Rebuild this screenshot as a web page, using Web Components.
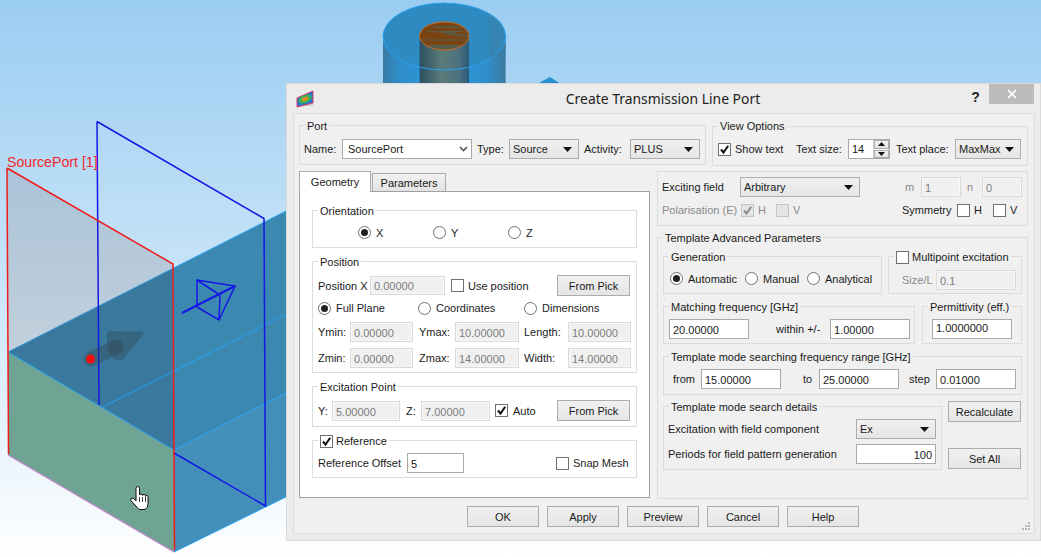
<!DOCTYPE html>
<html>
<head>
<meta charset="utf-8">
<title>Create Transmission Line Port</title>
<style>
  html, body { margin: 0; padding: 0; }
  body { width: 1041px; height: 557px; overflow: hidden; position: relative; font: 11px "Liberation Sans", sans-serif; color: #1a1a1a; }
</style>
</head>
<body>
<cad-scene></cad-scene>
<port-dialog></port-dialog>

<script>
/* shared by the panels that lay out rows of controls */
const PANEL_CSS = `
  :host { display: block; box-sizing: border-box; }
  .row { display: flex; align-items: center; }
  .l { display: block; flex: none; white-space: nowrap; }
  .off { color: #8a8a8a; }
`;

class BaseEl extends HTMLElement {
    constructor() {
        super();
        this.attachShadow({ mode: 'open' });
    }
    connectedCallback() {
        this.shadowRoot.innerHTML = this.markup();
    }
}

/* Group box with a title sitting on its top border */
class UiGroup extends BaseEl {
    markup() {
        const title = this.getAttribute('title-text');
        return `<style>
            :host { display: block; box-sizing: border-box; border: 1px solid #dcdcdc; position: relative; flex: none; }
            .legend { position: absolute; left: 5px; top: var(--legend-top, -8px); padding: 0 2px; height: 16px; line-height: 16px; background: var(--bg, #f0f0f0); white-space: nowrap; display: flex; align-items: center; }
        </style>
        <div class="legend">${title ? title : ''}<slot name="legend"></slot></div>
        <slot></slot>`;
    }
}

class UiInput extends BaseEl {
    markup() {
        return `<style>
            :host { display: block; box-sizing: border-box; flex: none; height: 20px; border: 1px solid #a9a9a9; background: #fff; padding: 1px 3px 0; line-height: 18px; white-space: nowrap; color: #1a1a1a; overflow: hidden; }
            :host([off]) { border-color: #d9d9d9; background: #f0f0f0; color: #7d7d7d; box-shadow: inset 0 0 0 1px #f8f8f8; }
            :host([end]) { text-align: right; }
        </style><slot></slot>`;
    }
}

class UiCombo extends BaseEl {
    markup() {
        const edit = this.hasAttribute('edit');
        const arrow = edit
            ? `<svg width="9" height="6" viewBox="0 0 9 6"><path d="M1 1l3.5 3.5L8 1" fill="none" stroke="#555" stroke-width="1.6"/></svg>`
            : `<svg width="9" height="5" viewBox="0 0 9 5"><path d="M0 0h9L4.5 5z" fill="#111"/></svg>`;
        return `<style>
            :host { display: flex; align-items: center; justify-content: space-between; box-sizing: border-box; flex: none; height: 20px; border: 1px solid #acacac; background: linear-gradient(#f0f0f0, #e5e5e5); padding: 0 6px 0 3px; white-space: nowrap; }
            :host([edit]) { background: #fff; border-color: #a9a9a9; padding-left: 5px; padding-right: 3px; }
        </style><span><slot></slot></span>${arrow}`;
    }
}

class UiSpin extends BaseEl {
    markup() {
        return `<style>
            :host { display: flex; box-sizing: border-box; flex: none; height: 20px; border: 1px solid #a9a9a9; background: #fff; }
            .v { flex: 1; padding-left: 3px; line-height: 19px; }
            .b { width: 15px; display: flex; flex-direction: column; gap: 1px; background: #fff; border-left: 1px solid #d0d0d0; }
            .b div { flex: 1; background: linear-gradient(#f2f2f2, #e2e2e2); border: 1px solid #acacac; display: flex; align-items: center; justify-content: center; }
        </style>
        <div class="v"><slot></slot></div>
        <div class="b">
            <div><svg width="7" height="4" viewBox="0 0 7 4"><path d="M3.5 0L7 4H0z" fill="#111"/></svg></div>
            <div><svg width="7" height="4" viewBox="0 0 7 4"><path d="M0 0h7L3.5 4z" fill="#111"/></svg></div>
        </div>`;
    }
}

class UiCheck extends BaseEl {
    markup() {
        const on = this.hasAttribute('checked');
        const off = this.hasAttribute('off');
        const tick = on ? `<svg width="11" height="11" viewBox="0 0 11 11"><path d="M2 5.5l2.5 3L9.2 1.8" fill="none" stroke="${off ? '#8d8d8d' : '#111'}" stroke-width="2"/></svg>` : '';
        return `<style>
            :host { display: flex; align-items: center; gap: var(--check-gap, 4px); flex: none; white-space: nowrap; }
            .box { box-sizing: border-box; width: 13px; height: 13px; flex: none; border: 1px solid #707070; background: #fff; display: flex; align-items: center; justify-content: center; }
            :host([off]) { color: #8a8a8a; }
            :host([off]) .box { border-color: #c4c4c4; background: #e4e4e4; }
        </style><span class="box">${tick}</span><slot></slot>`;
    }
}

class UiRadio extends BaseEl {
    markup() {
        return `<style>
            :host { display: flex; align-items: center; gap: 5px; flex: none; white-space: nowrap; }
            .dot { box-sizing: border-box; width: 13px; height: 13px; flex: none; border: 1px solid #707070; border-radius: 50%; background: #fff; display: flex; align-items: center; justify-content: center; }
            .dot i { width: 7px; height: 7px; border-radius: 50%; background: #222; }
        </style><span class="dot">${this.hasAttribute('checked') ? '<i></i>' : ''}</span><slot></slot>`;
    }
}

class UiButton extends BaseEl {
    markup() {
        return `<style>
            :host { display: flex; align-items: center; justify-content: center; box-sizing: border-box; flex: none; width: 73px; height: 21px; border: 1px solid #acacac; background: linear-gradient(#f0f0f0, #e5e5e5); white-space: nowrap; }
        </style><slot></slot>`;
    }
}

/* 3D view behind the dialog, a free canvas */
class CadScene extends BaseEl {
    markup() {
        return `<style>
            :host { position: absolute; left: 0; top: 0; width: 1041px; height: 557px; background: linear-gradient(#9bcdf2 0%, #c8e4f8 50%, #ffffff 100%); }
            svg { display: block; }
            text { font: 14.2px "Liberation Sans", sans-serif; fill: #f5262a; }
        </style>
        <svg width="1041" height="557" viewBox="0 0 1041 557">
            <defs>
                <linearGradient id="outer" x1="0" x2="1" y1="0" y2="0">
                    <stop offset="0" stop-color="#3a7ba3"/><stop offset=".12" stop-color="#2f8cc6"/>
                    <stop offset=".5" stop-color="#2a9be2"/><stop offset=".85" stop-color="#2f8fca"/><stop offset="1" stop-color="#3b789c"/>
                </linearGradient>
                <linearGradient id="inner" x1="0" x2="1" y1="0" y2="0">
                    <stop offset="0" stop-color="#2c4f62"/><stop offset=".45" stop-color="#5c7c78"/>
                    <stop offset=".8" stop-color="#4c7080"/><stop offset="1" stop-color="#2a5a78"/>
                </linearGradient>
                <clipPath id="core"><ellipse cx="444.3" cy="36" rx="24.7" ry="14"/></clipPath>
            </defs>

            <!-- coax stub -->
            <rect x="383" y="36" width="122.6" height="50" fill="url(#outer)"/>
            <ellipse cx="444.3" cy="36.5" rx="61.3" ry="33.5" fill="#2e8bc1"/>
            <path d="M489 13A61.3 33.5 0 0 1 505.6 36.5V60L489 58z" fill="#3a81a8" opacity=".6"/>
            <rect x="419.6" y="36" width="49.4" height="50" fill="url(#inner)"/>
            <ellipse cx="444.3" cy="36" rx="24.7" ry="14" fill="#7a4412"/>
            <g clip-path="url(#core)" fill="#4a6a68">
                <path d="M430 26.500h30l1 1.500h-24zM422 31h46l-24 3 26 3v-2zM420 39.500h50v1h-50zM426 45h36v5h-36z" opacity=".7"/>
            </g>
            <ellipse cx="444.3" cy="36" rx="24.7" ry="14" fill="none" stroke="#cf6a22" stroke-width="1"/>
            <ellipse cx="444.3" cy="36.5" rx="61.3" ry="33.5" fill="none" stroke="#27a2f2" stroke-width="1"/>
            <path d="M537 84L550 77L561 84z" fill="#2a8fd0"/>

            <!-- box -->
            <path d="M8 352L150 280L300 204V386L174 450z" fill="#3b88b1"/>
            <path d="M8 352L172 269L174 450z" fill="#3a799d"/>
            <path d="M174 450L300 386V490L174 552z" fill="#438fba"/>
            <path d="M8 352L174 450V552L8 455z" fill="#6fa393"/>
            <g fill="none" stroke="#27a2f2" stroke-width="1">
                <path d="M8 352L300 204M8 352L174 450L300 386M174 552L300 490M103 407L300 307"/>
            </g>
            <path d="M8 455L174 552" stroke="#c88ad0" stroke-width="1.2" fill="none"/>

            <!-- port planes -->
            <path d="M7 168L173 264V269L8 352z" fill="#807070" opacity=".22"/>
            <g fill="none" stroke="#1616e6" stroke-width="1.5">
                <path d="M97 121.5L264 218.5L265.5 506L174 453"/>
                <path d="M97 121.5L99 405"/>
                <path d="M197 280L235 286L219 320L197 307zM197 280L220 295L219 320"/>
                <path d="M182 313L235 286" stroke-width="2"/>
            </g>
            <path d="M7 168L173 264L174.5 550M7 168L8.5 454" fill="none" stroke="#f01c1c" stroke-width="1.500"/>
            <text x="7" y="167">SourcePort [1]</text>

            <!-- source arrow -->
            <path d="M110 331Q107 331 107 335V345Q108 355 116 360Q122 362 126 356L145 332z" fill="#323c46" opacity=".33"/>
            <path d="M91 359L116 347" stroke="#323c46" stroke-opacity=".33" stroke-width="15" stroke-linecap="round"/>
            <circle cx="90.5" cy="359" r="4.5" fill="#f01010"/>

            <!-- hand cursor -->
            <path d="M136 499V488.5q0-2 1.7-2t1.8 2V495q0-1 1.5-1t1.5 1v.5q0-1 1.5-1t1.5 1v1q0-1 1.3-1t1.2 1V504q0 4-3 5.500h-6L131 500.500q-1-2 1-2.500q2 0 4 3z" fill="#fff" stroke="#111" stroke-width="1"/>
            <path d="M142.500 497v5M145.500 497v5M139.500 497v5" stroke="#111" stroke-width=".8"/>
        </svg>`;
    }
}

class PortPanel extends BaseEl {
    markup() {
        return `<style>${PANEL_CSS}
            ui-group { width: 407px; height: 40px; padding: 13px 4px 0; }
        </style>
        <ui-group title-text="Port">
            <div class="row">
                <span class="l" style="width:38px">Name:</span>
                <ui-combo edit style="width:130px">SourcePort</ui-combo>
                <span class="l" style="margin-left:5px;width:32px">Type:</span>
                <ui-combo style="width:70px">Source</ui-combo>
                <span class="l" style="margin-left:5px;width:46px">Activity:</span>
                <ui-combo style="width:70px">PLUS</ui-combo>
            </div>
        </ui-group>`;
    }
}

class ViewPanel extends BaseEl {
    markup() {
        return `<style>${PANEL_CSS}
            :host { margin-top: 1px; --legend-top: -9px; }
            ui-group { width: 316px; height: 40px; padding: 12px 5px 0; }
        </style>
        <ui-group title-text="View Options">
            <div class="row">
                <ui-check checked style="width:78px">Show text</ui-check>
                <span class="l" style="width:52px">Text size:</span>
                <ui-spin style="width:42px">14</ui-spin>
                <span class="l" style="margin-left:6px;width:59px">Text place:</span>
                <ui-combo style="width:66px">MaxMax</ui-combo>
            </div>
        </ui-group>`;
    }
}

class GeometryTab extends BaseEl {
    markup() {
        return `<style>${PANEL_CSS}
            :host { width: 351px; display: flex; flex-direction: column; --bg: #fff; }
            .tabs { display: flex; align-items: flex-end; height: 20px; gap: 1px; }
            .tab { box-sizing: border-box; border: 1px solid #a9a9a9; display: flex; align-items: center; justify-content: center; }
            .tab.on { width: 72px; height: 21px; background: #fff; border-bottom: 0; position: relative; z-index: 1; margin-bottom: -1px; }
            .tab.other { width: 74px; height: 18px; background: linear-gradient(#f2f2f2, #e3e3e3); border-bottom: 0; }
            .pane { box-sizing: border-box; height: 307px; border: 1px solid #a0a0a0; background: #fff; padding: 18px 0 0 12px; display: flex; flex-direction: column; gap: 13px; }
            ui-group { width: 325px; padding-left: 5px; }
        </style>
        <div class="tabs">
            <div class="tab on">Geometry</div>
            <div class="tab other">Parameters</div>
        </div>
        <div class="pane">
            <ui-group title-text="Orientation" style="height:38px;padding:15px 0 0 45px">
                <div class="row">
                    <ui-radio checked style="width:75px">X</ui-radio>
                    <ui-radio style="width:75px">Y</ui-radio>
                    <ui-radio style="width:75px">Z</ui-radio>
                </div>
            </ui-group>

            <ui-group title-text="Position" style="height:112px;padding-top:13px">
                <div class="row">
                    <span class="l" style="width:52px">Position X</span>
                    <ui-input off style="width:75px;height:19px;line-height:17px">0.00000</ui-input>
                    <ui-check style="margin-left:6px;width:106px">Use position</ui-check>
                    <ui-button>From Pick</ui-button>
                </div>
                <div class="row" style="margin-top:5px;height:14px">
                    <ui-radio checked style="width:100px">Full Plane</ui-radio>
                    <ui-radio style="width:106px">Coordinates</ui-radio>
                    <ui-radio style="width:106px">Dimensions</ui-radio>
                </div>
                <div class="row" style="margin-top:7px">
                    <span class="l" style="width:32px">Ymin:</span>
                    <ui-input off style="width:63px">0.00000</ui-input>
                    <span class="l" style="margin-left:6px;width:36px">Ymax:</span>
                    <ui-input off style="width:64px">10.00000</ui-input>
                    <span class="l" style="margin-left:5px;width:44px">Length:</span>
                    <ui-input off style="width:63px">10.00000</ui-input>
                </div>
                <div class="row" style="margin-top:6px">
                    <span class="l" style="width:32px">Zmin:</span>
                    <ui-input off style="width:63px">0.00000</ui-input>
                    <span class="l" style="margin-left:6px;width:36px">Zmax:</span>
                    <ui-input off style="width:64px">14.00000</ui-input>
                    <span class="l" style="margin-left:5px;width:44px">Width:</span>
                    <ui-input off style="width:63px">14.00000</ui-input>
                </div>
            </ui-group>

            <ui-group title-text="Excitation Point" style="height:41px;padding-top:13px">
                <div class="row">
                    <span class="l" style="width:14px">Y:</span>
                    <ui-input off style="width:68px">5.00000</ui-input>
                    <span class="l" style="margin-left:6px;width:15px">Z:</span>
                    <ui-input off style="width:69px">7.00000</ui-input>
                    <ui-check checked style="margin-left:5px;width:62px;--check-gap:5px">Auto</ui-check>
                    <ui-button>From Pick</ui-button>
                </div>
            </ui-group>

            <ui-group style="height:38px;padding-top:12px">
                <ui-check slot="legend" checked style="--check-gap:3px">Reference</ui-check>
                <div class="row">
                    <span class="l" style="width:89px">Reference Offset</span>
                    <ui-input style="width:57px">5</ui-input>
                    <ui-check style="margin-left:92px">Snap Mesh</ui-check>
                </div>
            </ui-group>
        </div>`;
    }
}

class FieldPanel extends BaseEl {
    markup() {
        return `<style>${PANEL_CSS}
            :host { width: 371px; display: flex; flex-direction: column; gap: 11px; }
            .top { box-sizing: border-box; height: 55px; border: 1px solid #dcdcdc; padding: 5px 4px 0; }
            .tpl { width: 371px; height: 262px; padding: 18px 0 0 5px; }
            .stack { display: flex; flex-direction: column; gap: 12px; }
            .pair { display: flex; gap: 7px; }
            .side { display: flex; flex-direction: column; gap: 26px; margin-left: 6px; }
        </style>
        <div class="top">
            <div class="row">
                <span class="l" style="width:78px">Exciting field</span>
                <ui-combo style="width:120px">Arbitrary</ui-combo>
                <span class="l off" style="margin-left:45px;width:16px">m</span>
                <ui-input off style="width:40px">1</ui-input>
                <span class="l off" style="margin-left:6px;width:15px">n</span>
                <ui-input off style="width:40px">0</ui-input>
            </div>
            <div class="row" style="margin-top:6px;height:14px">
                <span class="l off" style="width:79px">Polarisation (E)</span>
                <ui-check off checked style="width:35px">H</ui-check>
                <ui-check off style="width:126px">V</ui-check>
                <span class="l" style="width:55px">Symmetry</span>
                <ui-check style="width:36px">H</ui-check>
                <ui-check>V</ui-check>
            </div>
        </div>

        <ui-group class="tpl" title-text="Template Advanced Parameters">
            <div class="stack">
                <div class="pair" style="gap:6px">
                    <ui-group title-text="Generation" style="width:219px;height:38px;padding:15px 0 0 6px">
                        <div class="row">
                            <ui-radio checked style="width:75px">Automatic</ui-radio>
                            <ui-radio style="width:62px">Manual</ui-radio>
                            <ui-radio>Analytical</ui-radio>
                        </div>
                    </ui-group>
                    <ui-group style="width:134px;height:38px;padding:13px 0 0 13px">
                        <ui-check slot="legend" style="--check-gap:3px">Multipoint excitation</ui-check>
                        <div class="row">
                            <span class="l off" style="width:34px">Size/L</span>
                            <ui-input off style="width:80px">0.1</ui-input>
                        </div>
                    </ui-group>
                </div>
                <div class="pair">
                    <ui-group title-text="Matching frequency [GHz]" style="width:252px;height:38px;padding:12px 0 0 5px">
                        <div class="row">
                            <ui-input style="width:80px">20.00000</ui-input>
                            <span class="l" style="margin-left:27px;width:54px">within +/-</span>
                            <ui-input style="width:80px">1.00000</ui-input>
                        </div>
                    </ui-group>
                    <ui-group title-text="Permittivity (eff.)" style="width:100px;height:38px;padding:12px 0 0 9px">
                        <ui-input style="width:80px;line-height:15px">1.0000000</ui-input>
                    </ui-group>
                </div>
                <ui-group title-text="Template mode searching frequency range [GHz]" style="width:359px;height:39px;padding:12px 0 0 9px">
                    <div class="row">
                        <span class="l" style="width:28px">from</span>
                        <ui-input style="width:80px">15.00000</ui-input>
                        <span class="l" style="margin-left:22px;width:16px">to</span>
                        <ui-input style="width:80px">25.00000</ui-input>
                        <span class="l" style="margin-left:10px;width:27px">step</span>
                        <ui-input style="width:80px">0.01000</ui-input>
                    </div>
                </ui-group>
            </div>
            <div class="row" style="margin-top:6px;align-items:flex-start">
                <ui-group title-text="Template mode search details" style="margin-top:5px;width:279px;height:64px;padding:12px 0 0 4px">
                    <div class="row">
                        <span class="l" style="width:188px">Excitation with field component</span>
                        <ui-combo style="width:80px">Ex</ui-combo>
                    </div>
                    <div class="row" style="margin-top:5px">
                        <span class="l" style="width:188px">Periods for field pattern generation</span>
                        <ui-input end style="width:80px">100</ui-input>
                    </div>
                </ui-group>
                <div class="side">
                    <ui-button>Recalculate</ui-button>
                    <ui-button>Set All</ui-button>
                </div>
            </div>
        </ui-group>`;
    }
}

class PortDialog extends BaseEl {
    markup() {
        return `<style>
            /* the window's place on the desktop */
            :host { position: absolute; left: 286px; top: 83px; width: 755px; height: 458px; box-sizing: border-box; border: 1px solid #d9d9d9; background: #ececec; display: flex; flex-direction: column; padding: 0 5px 6px 6px; font: 11px "Liberation Sans", sans-serif; color: #1a1a1a; }
            .bar { height: 29px; flex: none; display: flex; align-items: flex-start; }
            .ico { margin: 6px 0 0 3px; flex: none; }
            .title { flex: 1; text-align: center; font: 13.9px/29px "Noto Sans", sans-serif; color: #222; padding-left: 44px; }
            .q { font: bold 14px/26px "Liberation Sans", sans-serif; width: 15px; flex: none; margin-right: 6px; text-align: center; color: #222; }
            .x { width: 45px; height: 20px; flex: none; margin-right: 1px; background: #bcbcbc; display: flex; align-items: center; justify-content: center; }
            .frame { flex: 1; box-sizing: border-box; border: 1px solid #dcdcdc; background: #f0f0f0; padding: 11px 5px 0 5px; position: relative; --bg: #f0f0f0; }
            .top { display: flex; gap: 6px; }
            .main { display: flex; gap: 7px; margin-top: 5px; }
            .btns { display: flex; gap: 7px; margin: 7px 0 0 168px; }
            ui-button { width: 72px; margin-right: 1px; }
            .grip { position: absolute; right: 3px; bottom: 2px; }
        </style>
        <div class="bar">
            <svg class="ico" width="18" height="18" viewBox="0 0 18 18">
                <defs><clipPath id="pl"><path d="M1 8L17 1V13L1 17z"/></clipPath></defs>
                <path d="M2 16H17V13z" fill="#cfcfcf"/>
                <path d="M1 8L17 1V13L1 17z" fill="#2e6fd8"/>
                <g clip-path="url(#pl)">
                    <ellipse cx="9" cy="9" rx="7" ry="4" transform="rotate(-22 9 9)" fill="#2fb85a"/>
                    <ellipse cx="9" cy="9" rx="3.500" ry="2" transform="rotate(-22 9 9)" fill="#e08a20"/>
                </g>
                <path d="M1 8L17 1V13L1 17z" fill="none" stroke="#d8405a" stroke-width="1"/>
            </svg>
            <div class="title">Create Transmission Line Port</div>
            <div class="q">?</div>
            <div class="x"><svg width="10" height="10" viewBox="0 0 10 10"><path d="M1 1l8 8M9 1l-8 8" stroke="#fff" stroke-width="1.700"/></svg></div>
        </div>
        <div class="frame">
            <div class="top">
                <port-panel></port-panel>
                <view-panel></view-panel>
            </div>
            <div class="main">
                <geometry-tab></geometry-tab>
                <field-panel></field-panel>
            </div>
            <div class="btns">
                <ui-button>OK</ui-button>
                <ui-button>Apply</ui-button>
                <ui-button>Preview</ui-button>
                <ui-button>Cancel</ui-button>
                <ui-button>Help</ui-button>
            </div>
            <svg class="grip" width="9" height="9" viewBox="0 0 9 9" fill="#b5b5b5">
                <rect x="6" y="0" width="2" height="2"/><rect x="3" y="3" width="2" height="2"/><rect x="6" y="3" width="2" height="2"/>
                <rect x="0" y="6" width="2" height="2"/><rect x="3" y="6" width="2" height="2"/><rect x="6" y="6" width="2" height="2"/>
            </svg>
        </div>`;
    }
}

customElements.define('ui-group', UiGroup);
customElements.define('ui-input', UiInput);
customElements.define('ui-combo', UiCombo);
customElements.define('ui-spin', UiSpin);
customElements.define('ui-check', UiCheck);
customElements.define('ui-radio', UiRadio);
customElements.define('ui-button', UiButton);
customElements.define('cad-scene', CadScene);
customElements.define('port-panel', PortPanel);
customElements.define('view-panel', ViewPanel);
customElements.define('geometry-tab', GeometryTab);
customElements.define('field-panel', FieldPanel);
customElements.define('port-dialog', PortDialog);
</script>
</body>
</html>
